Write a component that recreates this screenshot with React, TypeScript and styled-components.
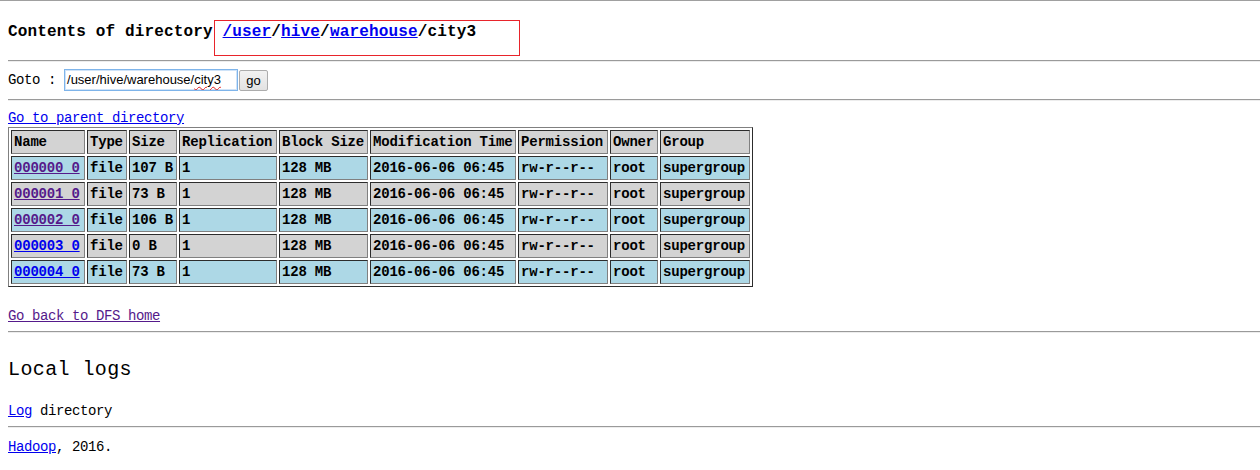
import styled, { createGlobalStyle } from 'styled-components';

const GlobalStyle = createGlobalStyle`
  html, body {
    margin: 0;
    padding: 0;
    background: #fff;
  }
  body {
    border-top: 1px solid #a0a0a0;
    font-family: "Liberation Mono", "DejaVu Sans Mono", monospace;
    font-size: 14px;
    letter-spacing: -0.4px;
    color: #000;
  }
`;

type Row = {
  name: string;
  size: string;
  visited: boolean;
};

const rows: Row[] = [
  { name: '000000_0', size: '107 B', visited: true },
  { name: '000001_0', size: '73 B', visited: true },
  { name: '000002_0', size: '106 B', visited: true },
  { name: '000003_0', size: '0 B', visited: false },
  { name: '000004_0', size: '73 B', visited: false },
];

// content widths of the columns, in px
const columns = [
  { title: 'Name', width: 68 },
  { title: 'Type', width: 34 },
  { title: 'Size', width: 42 },
  { title: 'Replication', width: 92 },
  { title: 'Block Size', width: 83 },
  { title: 'Modification Time', width: 140 },
  { title: 'Permission', width: 84 },
  { title: 'Owner', width: 42 },
  { title: 'Group', width: 84 },
];

const App = () => {
  return (
    <>
      <GlobalStyle />
      <Page>
        <Heading>
          Contents of directory{' '}
          <PathBox>
            <Link href="#">/user</Link>/<Link href="#">hive</Link>/<Link href="#">warehouse</Link>/city3
          </PathBox>
        </Heading>
        <Rule $top={18} />

        <GotoRow>
          <GotoLabel>Goto :&nbsp;</GotoLabel>
          <PathField>
            /user/hive/warehouse/<Misspelled>city3</Misspelled>
          </PathField>
          <GoButton type="button">go</GoButton>
        </GotoRow>
        <Rule $top={8} />

        <Line $top={9}>
          <Link href="#">Go to parent directory</Link>
        </Line>

        <Listing>
          <thead>
            <tr>
              {columns.map((c) => (
                <HeadCell key={c.title} style={{ width: c.width }}>
                  {c.title}
                </HeadCell>
              ))}
            </tr>
          </thead>
          <tbody>
            {rows.map((r, i) => (
              <tr key={r.name}>
                <Cell $blue={i % 2 === 0}>
                  <Link href="#" $visited={r.visited}>
                    {r.name}
                  </Link>
                </Cell>
                <Cell $blue={i % 2 === 0}>file</Cell>
                <Cell $blue={i % 2 === 0}>{r.size}</Cell>
                <Cell $blue={i % 2 === 0}>1</Cell>
                <Cell $blue={i % 2 === 0}>128 MB</Cell>
                <Cell $blue={i % 2 === 0}>2016-06-06 06:45</Cell>
                <Cell $blue={i % 2 === 0}>rw-r--r--</Cell>
                <Cell $blue={i % 2 === 0}>root</Cell>
                <Cell $blue={i % 2 === 0}>supergroup</Cell>
              </tr>
            ))}
          </tbody>
        </Listing>

        <Line $top={21}>
          <Link href="#" $visited>
            Go back to DFS home
          </Link>
        </Line>
        <Rule $top={7} />

        <SubHeading>Local logs</SubHeading>
        <Line $top={19}>
          <Link href="#">Log</Link> directory
        </Line>
        <Rule $top={7} />

        <Line $top={11}>
          <Link href="#">Hadoop</Link>, 2016.
        </Line>
      </Page>
    </>
  );
};

export default App;

const Page = styled.div`
  padding: 0 8px 16px;
`;

const Heading = styled.h3`
  margin: 21px 0 0;
  font-size: 16px;
  line-height: 20px;
  font-weight: bold;
  letter-spacing: 0.15px;
  white-space: nowrap;
`;

const PathBox = styled.span`
  position: relative;

  &::before {
    content: '';
    position: absolute;
    left: -9px;
    top: -3px;
    width: 304px;
    height: 34px;
    border: 1px solid #e8242b;
    pointer-events: none;
  }
`;

const Link = styled.a<{ $visited?: boolean }>`
  color: ${(p) => (p.$visited ? '#551a8b' : '#0000ee')};
  text-decoration: underline;
`;

const Rule = styled.hr<{ $top: number }>`
  margin: ${(p) => p.$top}px -8px 0 0;
  height: 0;
  border: 0;
  border-top: 1px solid #9a9a9a;
  border-bottom: 1px solid #ededed;
`;

const GotoRow = styled.div`
  display: flex;
  align-items: center;
  margin-top: 7px;
  height: 22px;
`;

const GotoLabel = styled.span`
  line-height: 16px;
  white-space: pre;
`;

const PathField = styled.div`
  box-sizing: border-box;
  width: 174px;
  height: 22px;
  padding: 2px 2px 0;
  border: 1px solid #7eb4ea;
  box-shadow: inset 0 0 0 1px #cfe3f8;
  font-family: "Liberation Sans", Arial, sans-serif;
  font-size: 13px;
  letter-spacing: 0;
  line-height: 16px;
  white-space: nowrap;
  overflow: hidden;
`;

const Misspelled = styled.span`
  text-decoration: underline wavy #e02020;
  text-decoration-thickness: 1px;
  text-underline-offset: 2px;
`;

const GoButton = styled.button`
  box-sizing: border-box;
  width: 29px;
  height: 21px;
  margin-left: 1px;
  padding: 0;
  border: 1px solid #acacac;
  border-radius: 2px;
  background: linear-gradient(#f2f2f2, #e2e2e2);
  font-family: "Liberation Sans", Arial, sans-serif;
  font-size: 13px;
  letter-spacing: 0;
  color: #000;
`;

const Line = styled.div<{ $top: number }>`
  margin-top: ${(p) => p.$top}px;
  line-height: 16px;
  white-space: nowrap;
`;

const Listing = styled.table`
  box-sizing: border-box;
  width: 745px;
  table-layout: fixed;
  margin-top: 1px;
  border: 1px outset #808080;
  border-spacing: 2px;
  font-size: 14px;
  font-weight: bold;
  letter-spacing: -0.2px;
`;

const HeadCell = styled.th`
  box-sizing: content-box;
  padding: 2px;
  height: 18px;
  line-height: 18px;
  text-align: left;
  font-weight: bold;
  white-space: nowrap;
  overflow: visible;
  background: #d3d3d3;
  border: 1px inset #808080;
`;

const Cell = styled.td<{ $blue: boolean }>`
  padding: 2px;
  height: 18px;
  line-height: 18px;
  white-space: nowrap;
  overflow: visible;
  background: ${(p) => (p.$blue ? '#add8e6' : '#d3d3d3')};
  border: 1px inset #808080;
`;

const SubHeading = styled.h2`
  margin: 23px 0 0;
  font-size: 20px;
  line-height: 28px;
  font-weight: normal;
  letter-spacing: 0.4px;
`;
